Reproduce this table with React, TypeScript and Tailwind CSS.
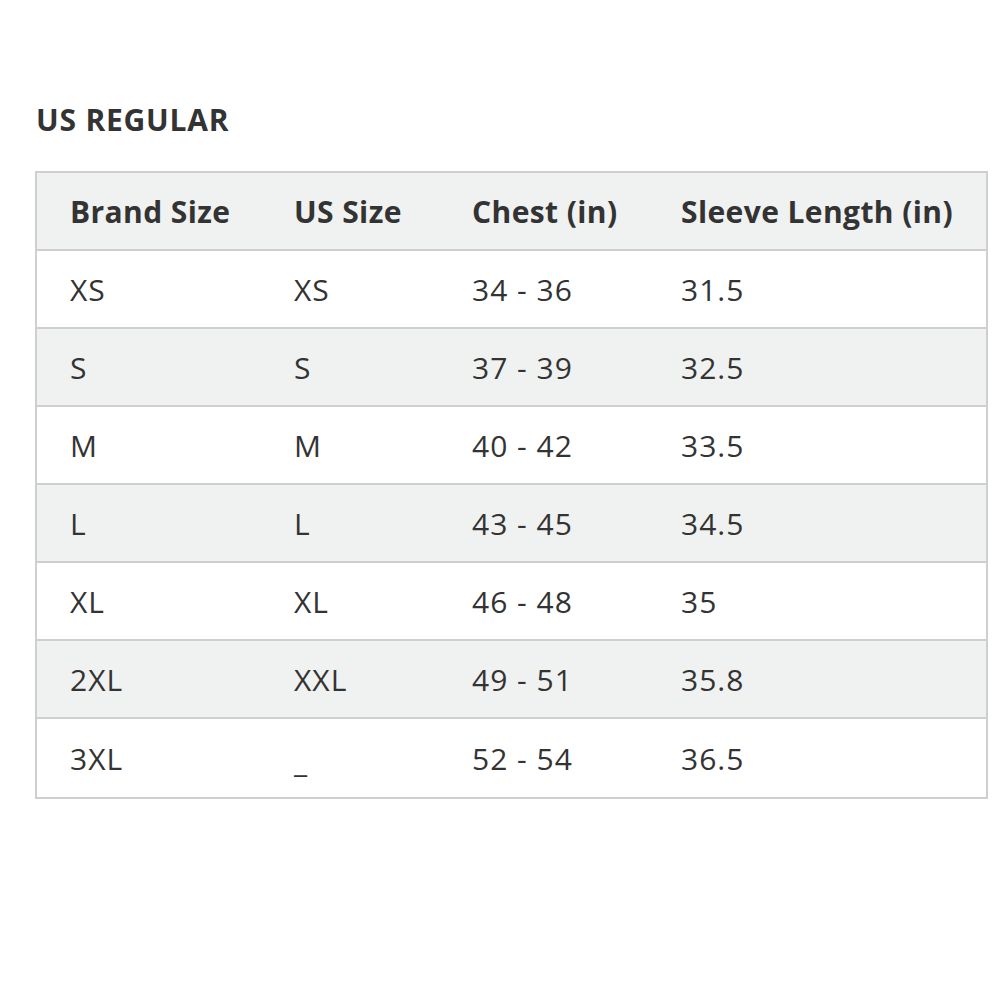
import React from "react";

const rows: string[][] = [
  ["XS", "XS", "34 - 36", "31.5"],
  ["S", "S", "37 - 39", "32.5"],
  ["M", "M", "40 - 42", "33.5"],
  ["L", "L", "43 - 45", "34.5"],
  ["XL", "XL", "46 - 48", "35"],
  ["2XL", "XXL", "49 - 51", "35.8"],
  ["3XL", "_", "52 - 54", "36.5"],
];

const headers = ["Brand Size", "US Size", "Chest (in)", "Sleeve Length (in)"];

export default function App() {
  return (
    <div
      className="w-[1000px] h-[1000px] bg-white text-[#333333] pt-[100px] pl-[35px]"
      style={{ fontFamily: "'Open Sans', 'Noto Sans', sans-serif" }}
    >
      <h2 className="text-[30px] font-bold leading-[40px] pl-[1px] tracking-[0.8px]">US REGULAR</h2>
      <div className="mt-[31px] w-[953px] border-2 border-[#cfcfcf]">
        <div className="grid grid-cols-[224px_178px_209px_1fr] h-[78px] items-center bg-[#f0f1f1] border-b-2 border-[#cfcfcf] text-[30px] font-bold tracking-[0.4px]">
          {headers.map((h) => (
            <div key={h} className="pl-[33px]">{h}</div>
          ))}
        </div>
        {rows.map((r, i) => (
          <div
            key={i}
            className={`grid grid-cols-[224px_178px_209px_1fr] h-[78px] items-center text-[30px] tracking-[1px] ${
              i % 2 === 1 ? "bg-[#f0f1f1]" : "bg-white"
            } ${i < rows.length - 1 ? "border-b-2 border-[#cfcfcf]" : ""}`}
          >
            {r.map((c, j) => (
              <div key={j} className={`pl-[33px] ${c === "_" ? "translate-y-[3px]" : ""}`}>{c}</div>
            ))}
          </div>
        ))}
      </div>
    </div>
  );
}
